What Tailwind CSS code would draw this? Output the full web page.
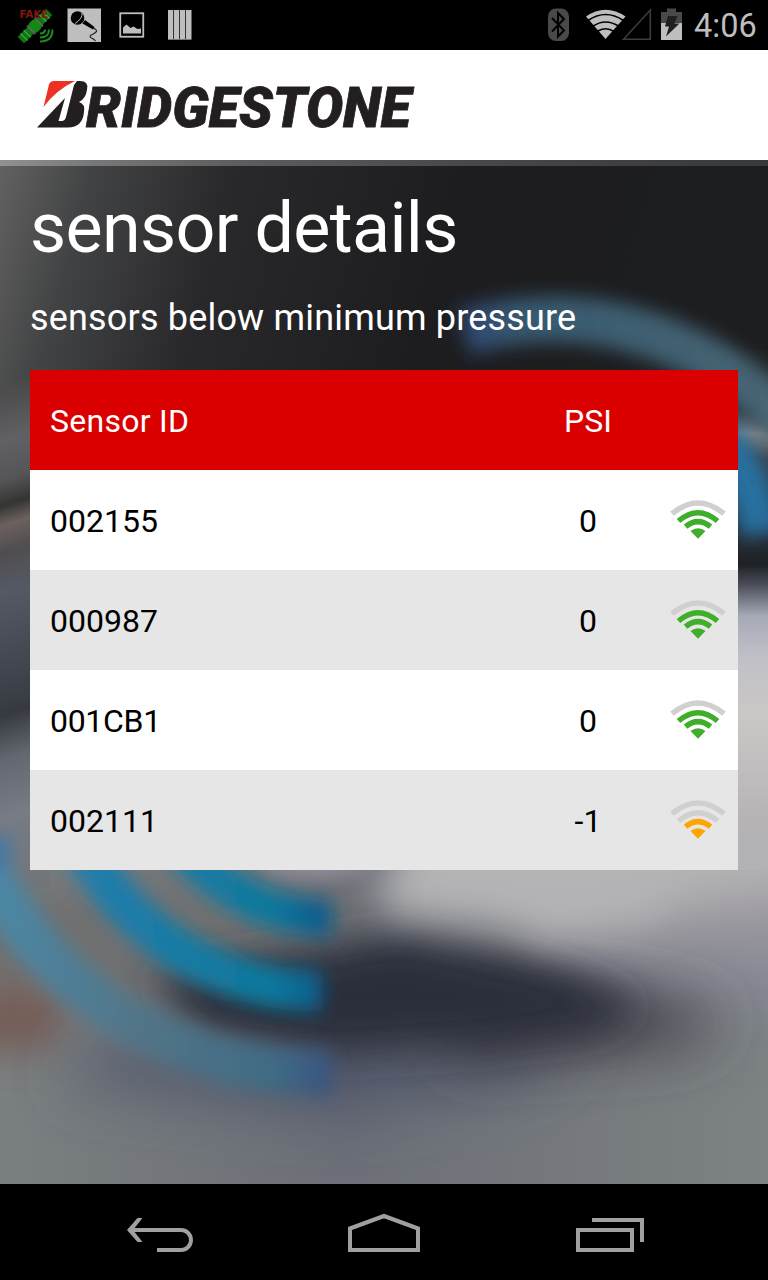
<!DOCTYPE html>
<html lang="en">
<head>
<meta charset="utf-8">
<title>Sensor details</title>
<script src="https://cdn.jsdelivr.net/npm/@tailwindcss/browser@4"></script>
</head>
<body class="bg-black">
<div class="flex h-[1280px] w-[768px] flex-col overflow-hidden font-['Roboto',sans-serif]">
  <!-- status bar -->
  <header class="flex h-[50px] shrink-0 items-center justify-between bg-black">
    <svg class="h-[50px] w-[220px]" viewBox="0 0 220 50">
      <g transform="rotate(-45 35 26)">
        <rect x="15" y="21.500" width="14" height="9" fill="#137313"/>
        <rect x="41" y="21.500" width="14" height="9" fill="#137313"/>
        <path d="M19.500 21v10M24 21v10M46 21v10M50.500 21v10" stroke="#35a535" stroke-width="1.500"/>
        <path d="M29 26h12" stroke="#6b7a6b" stroke-width="3"/>
        <rect x="30" y="20" width="10" height="12" rx="3" fill="#128a12"/>
        <path d="M29.500 20v12M40.500 20v12" stroke="#666" stroke-width="1.500"/>
      </g>
      <path d="M40 33.500q5 0 5-4M40 37.500q9 0 9-8M40 41.500q12.500 0 12.500-12" fill="none" stroke="#1f8a1f" stroke-width="2"/>
      <text x="19.500" y="18" font-family="DejaVu Sans" font-weight="bold" font-size="10.500" textLength="29" fill="#7c1a10">FAKE</text>
      <rect x="67.500" y="8.500" width="33.500" height="33.500" fill="#bebebe"/>
      <circle cx="77.500" cy="18" r="6.800" fill="#000"/>
      <path d="M82 12.500q1 6-7 11" fill="none" stroke="#bebebe" stroke-width="1"/>
      <path d="M85 20l9.500 7-1.500 2.500-10.500-6z" fill="#000"/>
      <path d="M93 28q5 2 3 4t-5 3q-2 2 .5 3t4 3" fill="none" stroke="#222" stroke-width="1.200"/>
      <rect x="120.250" y="13.250" width="23" height="23.500" fill="#000" stroke="#bebebe" stroke-width="1.800"/>
      <path d="M123 33.500v-6l3.500-3 4 3.500 3-1.500 4 2.500 3.500-.5v5z" fill="#bebebe"/>
      <path d="M168 10h23.500v29H168z" fill="#bebebe"/>
      <path d="M173.500 10v30M179.500 10v30M185.500 10v30" stroke="#333" stroke-width="1"/>
      <path d="M168 39.500h23.500" stroke="#777"/>
    </svg>
    <div class="flex items-center">
      <svg class="h-[50px] w-[148px]" viewBox="540 0 148 50">
        <rect x="548" y="8.500" width="21" height="32.500" rx="8" fill="#494949"/>
        <path d="M552 18l12 12.500-6 6V13l6 6-12 12.500" fill="none" stroke="#000" stroke-width="2"/>
        <path d="M605.500 39L586 16.500Q605.500 3 625.500 16.500z" fill="#bebebe"/>
        <path d="M588 20.500q17.500-12 35.500 0M592.500 26.500q13-9 26.500 0M597 31.500q8.500-5.500 17 0" fill="none" stroke="#000" stroke-width="1.700"/>
        <path d="M623.500 39.200L650.300 10V39.200z" fill="none" stroke="#3c3c3c" stroke-width="1.600"/>
        <path d="M661 12h6V8.500h9V12h6v11h-21z" fill="#494949"/>
        <path d="M661 23h21v17h-21z" fill="#bebebe"/>
        <path d="M668 16h9.500l-3 7.500h5L666 36.500l3-10h-4z" fill="#202020"/>
      </svg>
      <div class="mr-[12px] ml-[6px] w-[62px] pt-[2px] text-[32.500px] leading-[50px] text-[#bebebe]">4:06</div>
    </div>
  </header>

  <!-- brand -->
  <div class="h-[110px] shrink-0 bg-white">
    <svg class="h-[110px] w-[430px]" viewBox="0 50 430 110" role="img" aria-label="Bridgestone">
      <path d="M49 84.500Q50 81 54 81H75Q56 90 43.500 107z" fill="#ee3124"/>
      <path fill-rule="evenodd" d="M77 81h3q9 0 7 8.500-1 9-8 12.500 6.500 2 5 10-1.500 15.500-16 15.500H37L65 98 58.500 121h3q3.500 0 4.500-4L74 85z" fill="#231f20"/>
      <text x="86" y="127" font-family="Roboto" font-size="55.500" font-weight="900" font-style="italic" textLength="325" lengthAdjust="spacingAndGlyphs" fill="#231f20" stroke="#231f20" stroke-width=".8">RIDGESTONE</text>
    </svg>
  </div>

  <main class="relative h-[1024px] shrink-0 overflow-hidden bg-[#777b7e]">
    <!-- out-of-focus backdrop -->
    <svg class="absolute inset-0 h-full w-full" viewBox="0 160 768 1024" aria-hidden="true">
      <defs>
        <filter id="b8" filterUnits="userSpaceOnUse" x="-200" y="0" width="1200" height="1400"><feGaussianBlur stdDeviation="9"/></filter>
        <filter id="b18" filterUnits="userSpaceOnUse" x="-200" y="0" width="1200" height="1400"><feGaussianBlur stdDeviation="19"/></filter>
        <filter id="b30" filterUnits="userSpaceOnUse" x="-200" y="0" width="1200" height="1400"><feGaussianBlur stdDeviation="30"/></filter>
        <linearGradient id="top" x1="0" x2="1" y1="0" y2=".12"><stop offset="0" stop-color="#626262"/><stop offset=".12" stop-color="#424344"/><stop offset=".3" stop-color="#29292b"/><stop offset=".6" stop-color="#1d1d20"/><stop offset="1" stop-color="#1d1e20"/></linearGradient>
        <linearGradient id="left" x1="0" y1="330" x2="0" y2="890" gradientUnits="userSpaceOnUse"><stop offset=".09" stop-color="#505050" stop-opacity="0"/><stop offset=".14" stop-color="#525254"/><stop offset=".2" stop-color="#616165"/><stop offset=".27" stop-color="#555558"/><stop offset=".315" stop-color="#343433"/><stop offset=".35" stop-color="#6b615d"/><stop offset=".4" stop-color="#504d50"/><stop offset=".47" stop-color="#555964"/><stop offset=".6" stop-color="#434750"/><stop offset=".69" stop-color="#363a40"/><stop offset=".77" stop-color="#636870"/><stop offset=".87" stop-color="#777b83"/><stop offset="1" stop-color="#74777a"/></linearGradient>
        <linearGradient id="right" x1="0" y1="330" x2="0" y2="890" gradientUnits="userSpaceOnUse"><stop offset="0" stop-color="#1d1e20"/><stop offset=".14" stop-color="#222729"/><stop offset=".185" stop-color="#85878a"/><stop offset=".23" stop-color="#3d4248"/><stop offset=".42" stop-color="#1e2227"/><stop offset=".455" stop-color="#4b4e58"/><stop offset=".51" stop-color="#a5a9b6"/><stop offset=".58" stop-color="#bfbfc7"/><stop offset=".68" stop-color="#cac7c7"/><stop offset=".88" stop-color="#b8b4b5"/><stop offset=".96" stop-color="#a7a2a8"/></linearGradient>
        <linearGradient id="haze" x1="0" y1="868" x2="0" y2="1050" gradientUnits="userSpaceOnUse"><stop offset="0" stop-color="#a7a2a8"/><stop offset=".3" stop-color="#98979d"/><stop offset=".55" stop-color="#8b8c97"/><stop offset=".8" stop-color="#80848b"/><stop offset="1" stop-color="#7d8283"/></linearGradient>
        <linearGradient id="blue" x1="0" x2="340" y1="0" y2="0" gradientUnits="userSpaceOnUse"><stop offset="0" stop-color="#337fa8"/><stop offset=".35" stop-color="#1d7da9"/><stop offset=".8" stop-color="#0e789c"/><stop offset="1" stop-color="#075386"/></linearGradient>
        <linearGradient id="outer" x1="0" x2="340" y1="0" y2="0" gradientUnits="userSpaceOnUse"><stop offset="0" stop-color="#4c87a5"/><stop offset=".4" stop-color="#527587"/><stop offset=".8" stop-color="#3f6c85"/><stop offset="1" stop-color="#38507e"/></linearGradient>
        <linearGradient id="upper" x1="460" x2="768" y1="0" y2="0" gradientUnits="userSpaceOnUse"><stop offset="0" stop-color="#304674"/><stop offset=".2" stop-color="#37596f"/><stop offset="1" stop-color="#466573"/></linearGradient>
        <linearGradient id="floor" x1="0" x2="1"><stop offset="0" stop-color="#7a7f80"/><stop offset=".45" stop-color="#6c6f77"/><stop offset="1" stop-color="#7d8283"/></linearGradient>
      </defs>
      <rect y="160" width="768" height="1024" fill="url(#floor)"/>
      <rect y="160" width="768" height="340" fill="url(#top)"/>
      <g transform="skewY(-17)"><rect x="-20" y="330" width="70" height="570" fill="url(#left)"/></g>
      <rect x="700" y="350" width="80" height="518" fill="url(#right)"/>
      <path d="M520 868H900V1040H650L520 970z" fill="url(#haze)" filter="url(#b18)"/>
      <rect x="738" y="850" width="30" height="20" fill="#a8a3a9"/>

      <path d="M20 890H350V930L310 960H200L260 1010-80 980V910z" fill="#706f6f" filter="url(#b18)"/>
      <ellipse cx="12" cy="1018" rx="55" ry="34" fill="#755b55" filter="url(#b18)"/>
      <path d="M100 1040L330 1035 600 1030 520 1080 340 1115 60 1080z" fill="#50556a" opacity=".85" filter="url(#b30)"/>
      <path d="M450 970L640 992 730 1015 690 1045 450 1060z" fill="#3f3e46" filter="url(#b30)"/>
      <path d="M150 975L340 945 400 932 560 970 640 1005 600 1030 480 1045 330 1055 200 1030z" fill="#2c2d3a" filter="url(#b18)"/>
      <path d="M375 890L420 820H900V878L690 900 640 925 560 934 390 915z" fill="#b4b3b5" filter="url(#b18)"/>
      <ellipse cx="315" cy="866" rx="55" ry="12" fill="#918e9b" filter="url(#b8)"/>

      <g fill="none" filter="url(#b8)">
        <path d="M-13 870A374 374 0 0 0 332 1072" stroke="url(#outer)" stroke-width="46"/>
        <path d="M-6 835L-13 870" stroke="#4478a5" stroke-width="40"/>
        <path d="M68 810A268 268 0 0 0 322 991" stroke="url(#blue)" stroke-width="42"/>
        <path d="M142 728A190 190 0 0 0 332 918" stroke="url(#blue)" stroke-width="38"/>
        <path d="M464 332Q560 305 650 335T800 438" stroke="url(#upper)" stroke-width="46"/>
        <path d="M710 430Q752 470 762 534" stroke="#2670a0" stroke-width="42"/>
      </g>
    </svg>
    <div class="relative flex h-full flex-col px-[30px]">
      <div class="-mx-[30px] h-[6px] shrink-0 bg-linear-to-r from-white/30 to-white/12"></div>
      <h1 class="mt-[20px] h-[84px] text-[70px] leading-[84px] tracking-[-0.65px] text-white">sensor details</h1>
      <h2 class="mt-[26px] h-[44px] text-[36px] leading-[44px] tracking-[0.18px] text-white">sensors below minimum pressure</h2>
      <table class="mt-[30px] w-[708px] table-fixed border-collapse text-[32px] leading-[40px] text-black">
        <colgroup><col class="w-[498px]"><col class="w-[120px]"><col class="w-[90px]"></colgroup>
        <thead>
          <tr class="h-[100px] bg-[#db0000] text-white"><th class="pt-[2px] pl-[20px] text-left font-normal tracking-[0.25px]">Sensor ID</th><th class="pt-[2px] text-center font-normal">PSI</th><th></th></tr>
        </thead>
        <tbody>
          <tr class="h-[100px] bg-white"><td class="pt-[2px] pl-[20px]">002155</td><td class="pt-[2px] text-center">0</td><td><svg class="ml-[22px] h-10 w-14" viewBox="0 0 56 40"><use href="#strong"/></svg></td></tr>
          <tr class="h-[100px] bg-[#e6e6e6]"><td class="pt-[2px] pl-[20px]">000987</td><td class="pt-[2px] text-center">0</td><td><svg class="ml-[22px] h-10 w-14" viewBox="0 0 56 40"><use href="#strong"/></svg></td></tr>
          <tr class="h-[100px] bg-white"><td class="pt-[2px] pl-[20px] tracking-[-0.3px]">001CB1</td><td class="pt-[2px] text-center">0</td><td><svg class="ml-[22px] h-10 w-14" viewBox="0 0 56 40"><use href="#strong"/></svg></td></tr>
          <tr class="h-[100px] bg-[#e6e6e6]"><td class="pt-[2px] pl-[20px]">002111</td><td class="pt-[2px] text-center">-1</td><td><svg class="ml-[22px] h-10 w-14" viewBox="0 0 56 40"><use href="#weak"/></svg></td></tr>
        </tbody>
      </table>
    </div>
    <svg class="absolute h-0 w-0" aria-hidden="true">
      <defs>
        <g id="strong" fill="none" stroke-width="5.500">
          <path d="M2 13.700Q28 -7.700 54 13.700" stroke="#d0d0d0"/>
          <path d="M8.500 21Q28 4.500 47.500 21" stroke="#3fae2a"/>
          <path d="M15.500 26.700Q28 16.700 40.500 26.700" stroke="#3fae2a"/>
          <path d="M20.500 31Q28 25.500 35.500 31L28 38.700z" fill="#3fae2a"/>
        </g>
        <g id="weak" fill="none" stroke-width="5.500">
          <path d="M2 13.700Q28 -7.700 54 13.700" stroke="#d0d0d0"/>
          <path d="M8.500 21Q28 4.500 47.500 21" stroke="#d0d0d0"/>
          <path d="M15.500 26.700Q28 16.700 40.500 26.700" stroke="#ffa500"/>
          <path d="M20.500 31Q28 25.500 35.500 31L28 38.700z" fill="#ffa500"/>
        </g>
      </defs>
    </svg>
  </main>

  <!-- navigation bar -->
  <nav class="flex h-[96px] shrink-0 items-center justify-center gap-[128px] bg-black">
    <svg class="h-[96px] w-[100px]" viewBox="106 1184 100 96" fill="none" stroke="#a0a0a0" stroke-width="4"><path d="M131 1230h49.500a10 10 0 0 1 10.500 10a10 10 0 0 1-10.500 10H157"/><path d="M142.500 1218h-5L127 1230l10.500 12h5L133 1230z" fill="#a0a0a0" stroke="none"/></svg>
    <svg class="h-[96px] w-[100px]" viewBox="334 1184 100 96" fill="none" stroke="#a0a0a0" stroke-width="4"><path d="M350 1228.500L384 1216l34 12.500V1250H350z"/></svg>
    <svg class="h-[96px] w-[100px]" viewBox="562 1184 100 96" fill="none" stroke="#a0a0a0" stroke-width="4"><path d="M578 1230h54v20h-54zM592 1220h50v22"/></svg>
  </nav>
</div>
</body>
</html>
